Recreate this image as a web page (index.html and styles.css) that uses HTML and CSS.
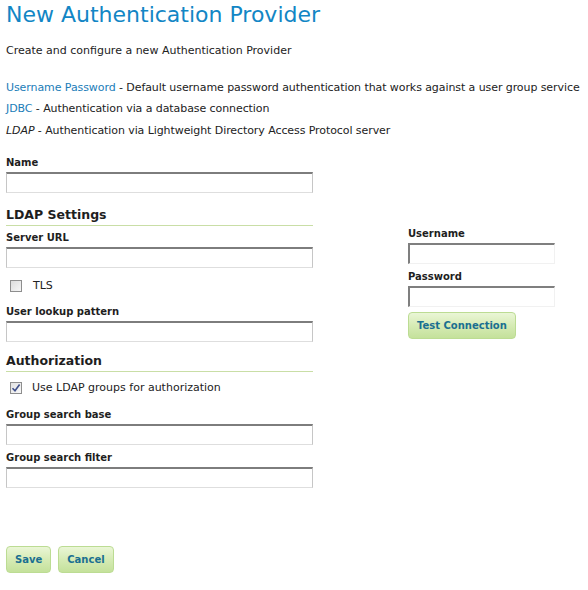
FILE: index.html
```html
<!DOCTYPE html>
<html lang="en">
<head>
<meta charset="utf-8">
<title>New Authentication Provider</title>
<link rel="stylesheet" href="styles.css">
</head>
<body>
<div class="page">
  <h1 class="title">New Authentication Provider</h1>
  <p class="intro">Create and configure a new Authentication Provider</p>
  <ul class="providers">
    <li><a class="link" href="#">Username Password</a> - Default username password authentication that works against a user group service</li>
    <li><a class="link" href="#">JDBC</a> - Authentication via a database connection</li>
    <li><em class="current">LDAP</em> - Authentication via Lightweight Directory Access Protocol server</li>
  </ul>

  <div class="field field-name">
    <label class="label">Name</label>
    <input class="text-input" type="text">
  </div>

  <div class="ldap">
    <div class="col-left">
      <h2 class="section-title">LDAP Settings</h2>
      <div class="field field-server">
        <label class="label">Server URL</label>
        <input class="text-input" type="text">
      </div>
      <div class="check-row check-tls">
        <span class="box"></span><span class="check-label">TLS</span>
      </div>
      <div class="field field-lookup">
        <label class="label">User lookup pattern</label>
        <input class="text-input" type="text">
      </div>
      <h2 class="section-title section-auth">Authorization</h2>
      <div class="check-row check-groups">
        <span class="box checked"><svg width="10" height="10" viewBox="0 0 10 10"><path d="M1.5 5.2 L4 7.8 L8.6 1.6" fill="none" stroke="#3f4f8a" stroke-width="1.6"/></svg></span><span class="check-label">Use LDAP groups for authorization</span>
      </div>
      <div class="field field-gbase">
        <label class="label">Group search base</label>
        <input class="text-input" type="text">
      </div>
      <div class="field field-gfilter">
        <label class="label">Group search filter</label>
        <input class="text-input" type="text">
      </div>
    </div>
    <div class="col-right">
      <div class="field field-user">
        <label class="label">Username</label>
        <input class="text-input inset" type="text">
      </div>
      <div class="field field-pass">
        <label class="label">Password</label>
        <input class="text-input inset" type="password">
      </div>
      <button class="btn btn-test" type="button">Test Connection</button>
    </div>
  </div>

  <div class="actions">
    <button class="btn" type="button">Save</button>
    <button class="btn" type="button">Cancel</button>
  </div>
</div>
</body>
</html>
```
FILE: styles.css
```css
html, body {
  margin: 0;
  padding: 0;
  background: #ffffff;
}
body {
  font-family: "DejaVu Sans", Verdana, sans-serif;
  font-size: 11px;
  color: #222222;
}
.page {
  padding: 2px 6px 0 6px;
}
.title {
  margin: 0;
  font-size: 22px;
  line-height: 26px;
  font-weight: normal;
  color: #1286c5;
}
.intro {
  margin: 16px 0 0 0;
  line-height: 14px;
}
.providers {
  list-style: none;
  margin: 18.5px 0 0 0;
  padding: 0;
}
.providers li {
  line-height: 21.5px;
  white-space: nowrap;
  letter-spacing: -0.08px;
}
.link {
  color: #1b7db8;
  text-decoration: none;
}
.current {
  font-style: italic;
}
.field {
  display: flex;
  flex-direction: column;
  width: 307px;
}
.label {
  font-weight: bold;
  font-size: 10px;
  line-height: 13px;
  margin-bottom: 3px;
  color: #1e1e1e;
}
.text-input {
  box-sizing: border-box;
  height: 21px;
  width: 307px;
  margin: 0;
  padding: 2px 3px;
  font: inherit;
  background: #ffffff;
  border-top: 2px solid #7d7d7d;
  border-left: 1px solid #c6c6c6;
  border-right: 1px solid #c6c6c6;
  border-bottom: 1px solid #dedede;
  outline: none;
}
.text-input.inset {
  width: 147px;
  border-top: 2px solid #7f7f7f;
  border-left: 2px solid #7f7f7f;
  border-right: 1px solid #f1f1f1;
  border-bottom: 1px solid #f1f1f1;
}
.field-name {
  margin-top: 15px;
}
.ldap {
  display: flex;
  align-items: flex-start;
  margin-top: 14px;
}
.col-left {
  width: 307px;
}
.col-right {
  margin-left: 95px;
  padding-top: 20px;
  display: flex;
  flex-direction: column;
  align-items: flex-start;
}
.section-title {
  margin: 0;
  font-size: 12.5px;
  line-height: 15px;
  font-weight: bold;
  color: #1e1e1e;
  padding-bottom: 3px;
  border-bottom: 1px solid #c9dea6;
}
.field-server {
  margin-top: 5px;
}
.check-row {
  display: flex;
  align-items: center;
  height: 13px;
  padding-left: 4px;
}
.box {
  box-sizing: border-box;
  width: 12px;
  height: 12px;
  border: 1px solid #8e8e8e;
  background: linear-gradient(135deg, #dcdcdc, #f6f6f6);
  display: flex;
  align-items: center;
  justify-content: center;
  margin-right: 11px;
}
.box.checked {
  background: linear-gradient(135deg, #e2e2e2, #f8f8f8);
}
.check-label {
  line-height: 13px;
}
.check-tls {
  margin-top: 11px;
}
.check-groups .box {
  margin-right: 10px;
}
.field-lookup {
  margin-top: 13px;
}
.section-auth {
  margin-top: 11px;
}
.check-groups {
  margin-top: 9px;
}
.field-gbase {
  margin-top: 14px;
}
.field-gfilter {
  margin-top: 6px;
}
.field-user,
.field-pass {
  width: 147px;
}
.field-pass {
  margin-top: 6px;
}
.btn {
  box-sizing: border-box;
  height: 27px;
  padding: 0 8px;
  margin: 0;
  font-family: "DejaVu Sans", Verdana, sans-serif;
  font-size: 10px;
  line-height: 25px;
  font-weight: bold;
  color: #1a6f91;
  border: 1px solid #bcdc93;
  border-radius: 4px;
  background: linear-gradient(to bottom, #eaf6d6 0%, #d6ebb5 50%, #c4e19b 100%);
  cursor: pointer;
}
.btn-test {
  margin-top: 5px;
}
.actions {
  display: flex;
  gap: 7px;
  margin-top: 58px;
}
```
